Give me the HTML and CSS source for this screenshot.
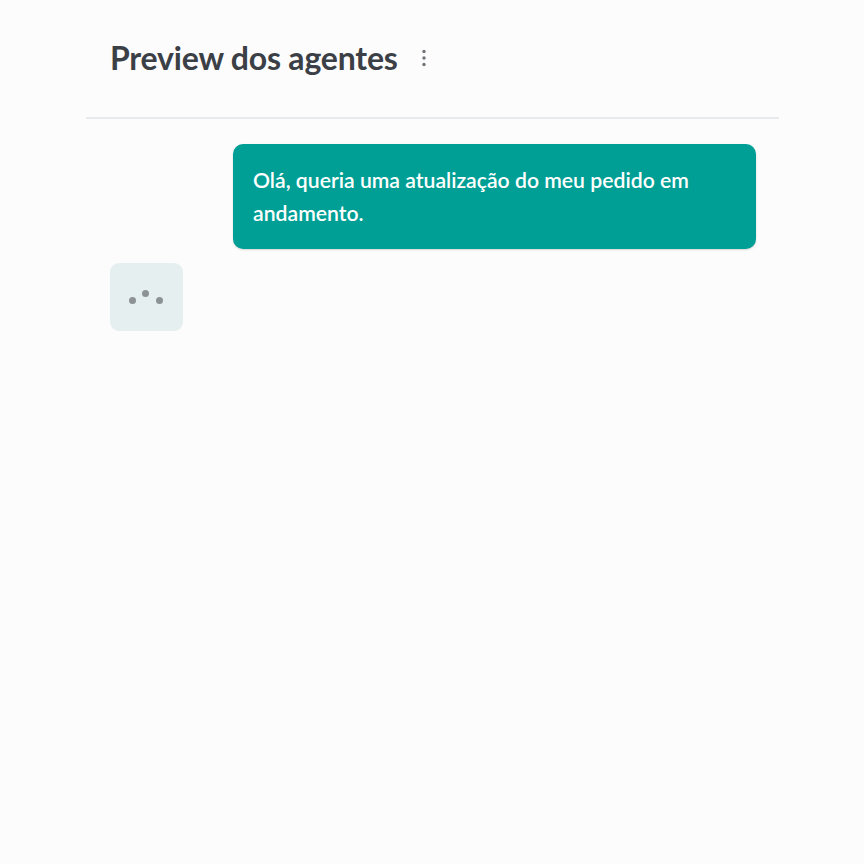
FILE: index.html
```html
<!DOCTYPE html>
<html lang="pt">
<head>
<meta charset="utf-8">
<link rel="stylesheet" href="styles.css">
</head>
<body>
<div class="panel">
  <header class="header">
    <h1 class="title">Preview dos agentes</h1>
    <button class="kebab" aria-label="Mais opções">
      <svg width="6" height="18" viewBox="0 0 6 18"><circle cx="3" cy="2.5" r="1.7" fill="#6f747a"/><circle cx="3" cy="9" r="1.7" fill="#6f747a"/><circle cx="3" cy="15.5" r="1.7" fill="#6f747a"/></svg>
    </button>
  </header>
  <div class="divider"></div>
  <div class="chat">
    <div class="msg-user">Olá, queria uma atualização do meu pedido em andamento.</div>
    <div class="typing">
      <span class="dot d1"></span><span class="dot d2"></span><span class="dot d3"></span>
    </div>
  </div>
</div>
</body>
</html>
```
FILE: styles.css
```css
html, body {
  margin: 0;
  padding: 0;
  background: #fcfcfc;
}
body {
  font-family: Lato, "Liberation Sans", sans-serif;
  width: 864px;
  height: 864px;
}
.panel {
  padding-left: 86px;
  width: 693px;
}
.header {
  display: flex;
  align-items: center;
  height: 117px;
  padding-left: 24px;
  box-sizing: border-box;
}
.title {
  margin: 0;
  font-size: 32px;
  font-weight: 700;
  color: #3b4046;
  letter-spacing: -0.2px;
  position: relative;
  top: -1px;
}
.kebab {
  margin-left: 23px;
  background: none;
  border: none;
  padding: 0;
  display: flex;
  align-items: center;
  position: relative;
  top: -1px;
}
.divider {
  height: 2px;
  background: #e8ebee;
}
.chat {
  display: flex;
  flex-direction: column;
  padding: 25px 23px 0 24px;
}
.msg-user {
  align-self: flex-end;
  width: 523px;
  box-sizing: border-box;
  background: #009f96;
  color: #ffffff;
  font-size: 21.2px;
  font-weight: 600;
  line-height: 33px;
  padding: 20px 20px 19px 20px;
  border-radius: 10px;
  box-shadow: 0 1px 2px rgba(0,0,0,0.15);
}
.typing {
  margin-top: 14px;
  width: 73px;
  height: 68px;
  border-radius: 9px;
  background: #e5eff0;
  position: relative;
}
.dot {
  position: absolute;
  width: 7px;
  height: 7px;
  border-radius: 50%;
  background: #8d9294;
}
.d1 { left: 19px; top: 34px; }
.d2 { left: 32px; top: 27px; }
.d3 { left: 46px; top: 34px; }
```
